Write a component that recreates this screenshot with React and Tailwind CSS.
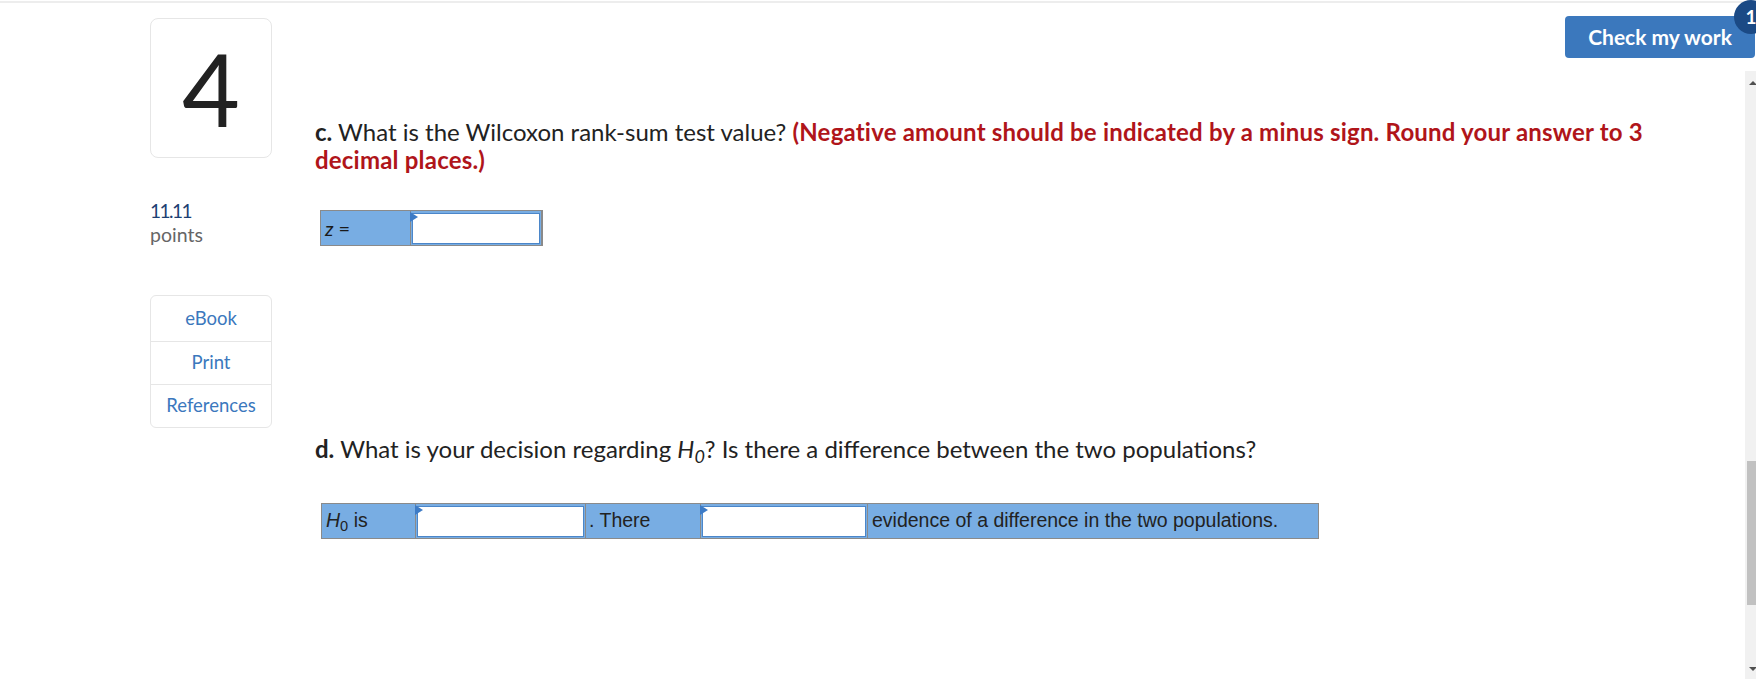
import React from "react";

function Drop({ w }) {
  return (
    <div className={`relative h-full shrink-0 border-x border-[#8a8a8a] px-[1px] pt-[2px] pb-[1px] ${w}`}>
      <div className="h-full w-full border border-[#4b86c9] bg-white" />
      <div className="absolute left-[-1px] top-[1px] h-0 w-0 border-y-[5px] border-l-[8px] border-y-transparent border-l-[#3d7bc6]" />
    </div>
  );
}

export default function App() {
  return (
    <div className="relative h-[679px] w-full overflow-hidden bg-white font-['Lato',sans-serif]">
      <div className="mt-[1px] h-[2px] bg-[#ededed]" />
      <div className="flex h-[676px]">
        <aside className="ml-[150px] w-[122px] shrink-0 pt-[15px]">
          <div className="flex h-[140px] items-center justify-center rounded-[8px] border border-[#e6e6e6]">
            <span className="text-[100px] leading-none text-[#222]">4</span>
          </div>
          <div className="mt-[42px] text-[19px] leading-[22px] tracking-[-1.5px] text-[#1d3f73]">11.11</div>
          <div className="mt-[2px] text-[19.5px] leading-[22px] text-[#666]">points</div>
          <div className="mt-[49px] overflow-hidden rounded-[6px] border border-[#e6e6e6] text-center text-[18.5px] text-[#3b78bd]">
            <div className="flex h-[45px] items-center justify-center">eBook</div>
            <div className="flex h-[43px] items-center justify-center border-t border-[#e6e6e6]">Print</div>
            <div className="flex h-[43px] items-center justify-center border-t border-[#e6e6e6]">References</div>
          </div>
        </aside>
        <main className="flex min-w-0 flex-1 flex-col">
          <div className="flex justify-end pr-[1px] pt-[13px]">
            <button className="relative h-[42px] w-[190px] rounded-[4px] bg-[#3b78bd] text-[21px] font-bold text-white">
              Check my work
              <span className="absolute left-[169px] top-[-16px] flex h-[34px] w-[34px] items-center justify-center rounded-full bg-[#1b4a85] text-[19px] font-bold text-white">
                1
              </span>
            </button>
          </div>
          <div className="mt-[13px] flex flex-1">
            <div className="flex-1 pl-[43px] pt-[47px]">
              <p className="w-[1360px] text-[24px] leading-[28px] text-[#222]">
                <b className="font-bold">c.</b> What is the Wilcoxon rank-sum test value?{" "}
                <b className="font-bold tracking-[0.2px] text-[#b0151a]">
                  (Negative amount should be indicated by a minus sign. Round your answer to 3 decimal places.)
                </b>
              </p>
              <div className="ml-[5px] mt-[36px] flex h-[36px] w-[223px] border border-[#8a8a8a] bg-[#78ade3] text-[20px] text-[#1a1a1a]">
                <div className="flex w-[89px] shrink-0 items-center pl-[4px]">
                  <i>z</i>&nbsp;=
                </div>
                <Drop w="w-[132px]" />
              </div>
              <p className="mt-[189px] text-[24px] leading-[27px] text-[#222]">
                <b className="font-bold">d.</b> What is your decision regarding{" "}
                <i>H</i>
                <sub className="italic">0</sub>? Is there a difference between the two populations?
              </p>
              <div className="ml-[6px] mt-[41px] flex h-[36px] w-[998px] border border-[#8a8a8a] bg-[#78ade3] font-['Liberation_Sans',Arial,sans-serif] text-[19.5px] text-[#222]">
                <div className="flex w-[93px] shrink-0 items-center pl-[4px]">
                  <span>
                    <i>H</i>
                    <sub>0</sub> is
                  </span>
                </div>
                <Drop w="w-[171px]" />
                <div className="flex w-[114px] shrink-0 items-center pl-[3px]">. There</div>
                <Drop w="w-[168px]" />
                <div className="flex flex-1 items-center pl-[4px]">evidence of a difference in the two populations.</div>
              </div>
            </div>
            <div className="relative w-[11px] shrink-0 bg-[#f1f1f1]">
              <div className="absolute left-[4px] top-[10px] h-0 w-0 border-x-[4px] border-b-[4px] border-x-transparent border-b-[#505050]" />
              <div className="absolute left-[2px] top-[390px] h-[144px] w-[9px] bg-[#c1c1c1]" />
              <div className="absolute bottom-[8px] left-[4px] h-0 w-0 border-x-[4px] border-t-[4px] border-x-transparent border-t-[#505050]" />
            </div>
          </div>
        </main>
      </div>
    </div>
  );
}
